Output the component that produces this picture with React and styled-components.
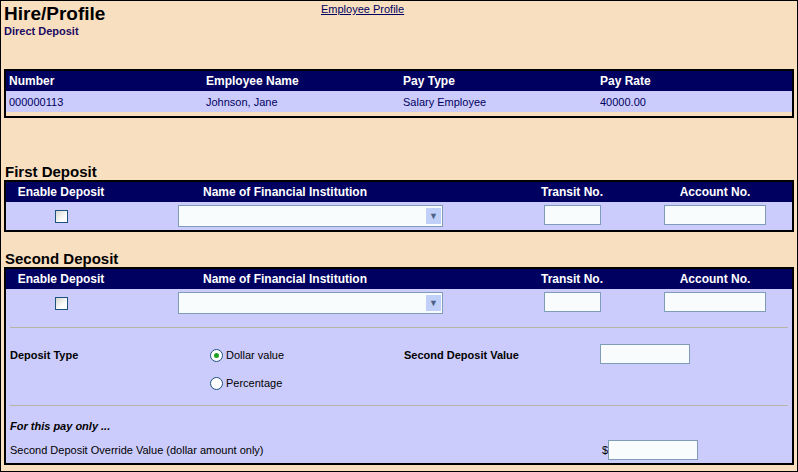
import React from "react";
import styled, { createGlobalStyle } from "styled-components";

const Global = createGlobalStyle`
  html, body { margin: 0; padding: 0; background: #fff; }
  body { font-family: "Liberation Sans", Arial, sans-serif; }
`;

const Page = styled.div`
  width: 798px;
  height: 472px;
  box-sizing: border-box;
  border: 1px solid #000;
  background: #f8dfc0;
  padding: 1px 3px 0 3px;
  position: relative;
  overflow: hidden;
`;

const TopBar = styled.div`
  display: flex;
  height: 67px;
`;

const TitleBlock = styled.div`
  width: 317px;
  h1 { margin: 0; font-size: 19px; font-weight: bold; line-height: 23px; color: #000; }
  div { font-size: 11px; font-weight: bold; color: #1a0a60; margin-top: 0; }
`;

const Link = styled.a`
  font-size: 11px;
  color: #000060;
  text-decoration: underline;
  margin-top: 1px;
`;

const Box = styled.div`
  border: 2px solid #000;
  background: #ccccfc;
`;

const InfoHead = styled.div`
  display: grid;
  grid-template-columns: repeat(4, 197px);
  background: #000060;
  color: #fff;
  font-size: 12px;
  font-weight: bold;
  height: 20px;
  align-items: center;
  span { padding-left: 3px; }
`;

const InfoRow = styled(InfoHead)`
  background: #ccccfc;
  color: #000060;
  font-weight: normal;
  font-size: 11px;
  height: 21px;
`;

const InfoTail = styled.div`
  height: 4px;
  background: #f8dfc0;
`;

const SectionTitle = styled.h2`
  margin: 0;
  font-size: 15px;
  font-weight: bold;
  line-height: 17px;
  color: #000;
  padding-left: 1px;
  margin-top: ${(p) => p.$top}px;
`;

const DepGrid = styled.div`
  display: grid;
  grid-template-columns: 110px 338px 46px 144px 142px;
  align-items: center;
  height: ${(p) => (p.$head ? 20 : 28)}px;
  background: ${(p) => (p.$head ? "#000060" : "#ccccfc")};
  color: #fff;
  font-size: 12px;
  font-weight: bold;
  & > * { justify-self: center; }
`;

const Check = styled.span`
  width: 11px;
  height: 11px;
  border: 1px solid #1c5180;
  background: linear-gradient(135deg, #d8d8d0 0%, #fff 70%);
`;

const Select = styled.div`
  grid-column: 2;
  justify-self: start !important;
  margin-left: 62px;
  width: 261px;
  height: 18px;
  border: 1px solid #7f9db9;
  background: #f8fcfc;
  display: flex;
  justify-content: flex-end;
  align-items: center;
  padding: 1px;
  span {
    width: 15px; height: 16px; background: #c0d0f8;
    display: flex; align-items: center; justify-content: center;
    color: #4d6185; font-size: 9px;
  }
`;

const Input = styled.span`
  display: inline-block;
  width: ${(p) => p.$w}px;
  height: 18px;
  border: 1px solid #7f9db9;
  background: #f8fcfc;
`;

const Extra = styled.div`
  padding: 0 4px;
  color: #000;
  font-size: 11px;
`;

const Rule = styled.div`
  border-top: 1px solid #b8b4a4;
  margin: ${(p) => p.$m};
`;

const TypeGrid = styled.div`
  display: grid;
  grid-template-columns: 200px 194px 196px 1fr;
  grid-template-rows: 28px 28px;
  align-items: center;
  margin-top: 13px;
  b { font-weight: bold; }
`;

const Radio = styled.label`
  display: flex;
  align-items: center;
  gap: 3px;
  i {
    width: 11px; height: 11px; border-radius: 50%;
    border: 1px solid #1c5180; background: #fff;
    display: flex; align-items: center; justify-content: center;
  }
  i::after {
    content: ""; width: 5px; height: 5px; border-radius: 50%;
    background: ${(p) => (p.$on ? "#21a121" : "transparent")};
  }
`;

const Override = styled.div`
  display: flex;
  align-items: center;
  margin-top: 8px;
  span:first-child { width: 592px; }
`;

export default function App() {
  const heads = ["Enable Deposit", "Name of Financial Institution", null, "Transit No.", "Account No."];
  const depositRows = (
    <>
      <DepGrid $head>
        {heads.map((h, i) => <span key={i} style={{ gridColumn: i + 1 }}>{h}</span>)}
      </DepGrid>
      <DepGrid>
        <Check />
        <Select><span>▼</span></Select>
        <span style={{ gridColumn: 4 }}><Input $w={55} /></span>
        <span style={{ gridColumn: 5 }}><Input $w={100} /></span>
      </DepGrid>
    </>
  );
  return (
    <Page>
      <Global />
      <TopBar>
        <TitleBlock>
          <h1>Hire/Profile</h1>
          <div>Direct Deposit</div>
        </TitleBlock>
        <Link>Employee Profile</Link>
      </TopBar>
      <Box>
        <InfoHead><span>Number</span><span>Employee Name</span><span>Pay Type</span><span>Pay Rate</span></InfoHead>
        <InfoRow><span>000000113</span><span>Johnson, Jane</span><span>Salary Employee</span><span>40000.00</span></InfoRow>
        <InfoTail />
      </Box>
      <SectionTitle $top={45}>First Deposit</SectionTitle>
      <Box>{depositRows}</Box>
      <SectionTitle $top={18}>Second Deposit</SectionTitle>
      <Box>
        {depositRows}
        <Extra>
          <Rule $m="10px 0 0" />
          <TypeGrid>
            <b>Deposit Type</b>
            <Radio $on><i />Dollar value</Radio>
            <b>Second Deposit Value</b>
            <span><Input $w={88} /></span>
            <span />
            <Radio><i />Percentage</Radio>
          </TypeGrid>
          <Rule $m="8px 0 0" />
          <div style={{ marginTop: 14 }}><b><i>For this pay only ...</i></b></div>
          <Override>
            <span>Second Deposit Override Value (dollar amount only)</span>
            <span>$</span>
            <Input $w={88} />
          </Override>
          <div style={{ height: 3 }} />
        </Extra>
      </Box>
    </Page>
  );
}
